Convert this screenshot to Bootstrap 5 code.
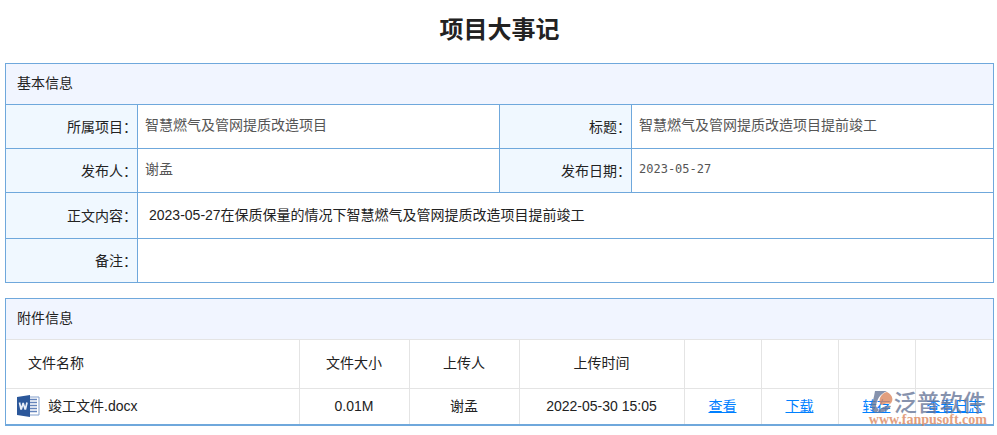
<!DOCTYPE html>
<html lang="zh-CN">
<head>
<meta charset="utf-8">
<meta name="viewport" content="width=device-width, initial-scale=1">
<title>项目大事记</title>
<link href="https://cdn.jsdelivr.net/npm/bootstrap@5.3.0/dist/css/bootstrap.min.css" rel="stylesheet">
<style>
  body { font-family: "Liberation Sans", "Noto Sans CJK SC", sans-serif; font-size: 14px; line-height: 20px; color: #222; padding: 0 3px 0 5px; }
  .page-title { font-size: 24px; line-height: 36px; padding: 12px 0 15px; }
  .sheet { table-layout: fixed; color: #222; }
  .sheet > :not(caption) > * > * { background-color: transparent; font-weight: 400; color: inherit; box-shadow: none; padding: 0; }
  .sheet > thead > tr > .section-head { background-color: #f1f5ff; height: 41px; padding: 0 11px 2px; }
  .info { margin-bottom: 15px; }
  .info > * > tr > * { border: 1px solid #6fa8dc; height: 44px; }
  .info > tbody > tr > th { background-color: #f0f8ff; text-align: right; }
  .info > tbody > tr > td { padding: 0 7px 4px; color: #555; }
  .info > tbody > .body-row > * { height: 46px; }
  .info > tbody > .body-row > td { color: #222; padding: 0 11px 2px; }
  .col-label { width: 132px; }
  .info > tbody > tr > .date-value { font-family: "DejaVu Sans Mono", monospace; font-size: 12px; }
  .files-frame { border: solid #6fa8dc; border-width: 1px 1px 2px; }
  .files > * > tr > * { border: 0 solid #e4e4e4; text-align: center; height: 36px; }
  .files > * > tr > * + * { border-left-width: 1px; }
  .files > thead > tr > .section-head { text-align: left; height: 40px; }
  .files > thead > .names-row > th { height: 49px; border-top-width: 1px; border-bottom-width: 1px; padding-bottom: 2px; }
  .files > tbody > tr > td { border-bottom-width: 0; }
  .files > thead > .names-row > .first { text-align: left; padding-left: 22px; }
  .files > tbody > tr > .first { padding-left: 11px; }
  .files a { color: #0080ff; }
  .word-icon { width: 23px; height: 24px; }
  .col-short { width: 110px; } .col-time { width: 165px; } .col-link { width: 77px; } .col-log { width: 78px; }
  .brand { right: 6px; bottom: -2px; opacity: .8; pointer-events: none; }
  .brand-mark { width: 25px; height: 24px; }
  .brand-name { font-family: "Noto Sans CJK SC", sans-serif; font-size: 23px; line-height: 22px; font-weight: 500; color: #697799; }
  .brand-site { font-family: "Liberation Serif", serif; font-size: 14px; line-height: 12px; font-weight: 700; color: #dc8860; }
</style>
<script src="https://cdn.jsdelivr.net/npm/bootstrap@5.3.0/dist/js/bootstrap.bundle.min.js"></script>
</head>
<body>
<h1 class="page-title text-center fw-bold m-0">项目大事记</h1>
<main>
  <table class="table sheet info">
    <colgroup><col class="col-label"><col><col class="col-label"><col></colgroup>
    <thead><tr><th class="section-head align-middle" colspan="4">基本信息</th></tr></thead>
    <tbody class="align-middle">
      <tr><th scope="row">所属项目：</th><td>智慧燃气及管网提质改造项目</td><th scope="row">标题：</th><td>智慧燃气及管网提质改造项目提前竣工</td></tr>
      <tr><th scope="row">发布人：</th><td>谢孟</td><th scope="row">发布日期：</th><td class="date-value">2023-05-27</td></tr>
      <tr class="body-row"><th scope="row">正文内容：</th><td colspan="3">2023-05-27在保质保量的情况下智慧燃气及管网提质改造项目提前竣工</td></tr>
      <tr><th scope="row">备注：</th><td colspan="3"></td></tr>
    </tbody>
  </table>
  <div class="files-frame position-relative">
    <table class="table sheet files mb-0">
      <colgroup><col><col class="col-short"><col class="col-short"><col class="col-time"><col class="col-link"><col class="col-link"><col class="col-link"><col class="col-log"></colgroup>
      <thead class="align-middle">
        <tr><th class="section-head" colspan="8">附件信息</th></tr>
        <tr class="names-row"><th class="first" scope="col">文件名称</th><th scope="col">文件大小</th><th scope="col">上传人</th><th scope="col">上传时间</th><th></th><th></th><th></th><th></th></tr>
      </thead>
      <tbody class="align-middle">
        <tr>
          <td class="first">
            <div class="d-flex align-items-center gap-2">
              <svg class="word-icon" viewBox="0 0 23 24" aria-hidden="true">
                <path d="M12 3h10v18H12z" fill="#fff" stroke="#839fcb"/>
                <path d="M13 5.500h7M13 8.500h7M13 11.500h7M13 14.500h7M13 17.500h7" stroke="#6484bc" stroke-width="1.300"/>
                <path d="M0 3 13 1v22L0 21z" fill="#2b579a"/>
                <path d="m2.500 8.500 1.400 6.500h.5L6 9.500h.3L8 15h.5L10 8.500" fill="none" stroke="#e8eef8" stroke-width="1.700"/>
              </svg>
              <span>竣工文件.docx</span>
            </div>
          </td>
          <td>0.01M</td><td>谢孟</td><td>2022-05-30 15:05</td>
          <td><a href="#view">查看</a></td><td><a href="#download">下载</a></td><td><a href="#save">转存</a></td><td><a href="#log">查看日志</a></td>
        </tr>
      </tbody>
    </table>
    <div class="brand position-absolute">
      <div class="d-flex">
        <svg class="brand-mark" viewBox="0 0 25 24" aria-hidden="true">
          <path d="M6 1h12C11 4 8 9 7 16c1 2 2 3 3 4l-3 3c-3-1-5-4-4-8L1 17C4 12 5 7 6 1z" fill="#697799"/>
          <path d="M12 15C8 9 13 3 18 2c6 3 7 9 3 12-3-1-5 0-9 1z" fill="#dc8860"/>
          <path d="M8 23c3-5 8-8 14-7-2 4-7 7-14 7z" fill="#697799"/>
        </svg>
        <span class="brand-name">泛普软件</span>
      </div>
      <div class="brand-site text-end">www.fanpusoft.com</div>
    </div>
  </div>
</main>
</body>
</html>
